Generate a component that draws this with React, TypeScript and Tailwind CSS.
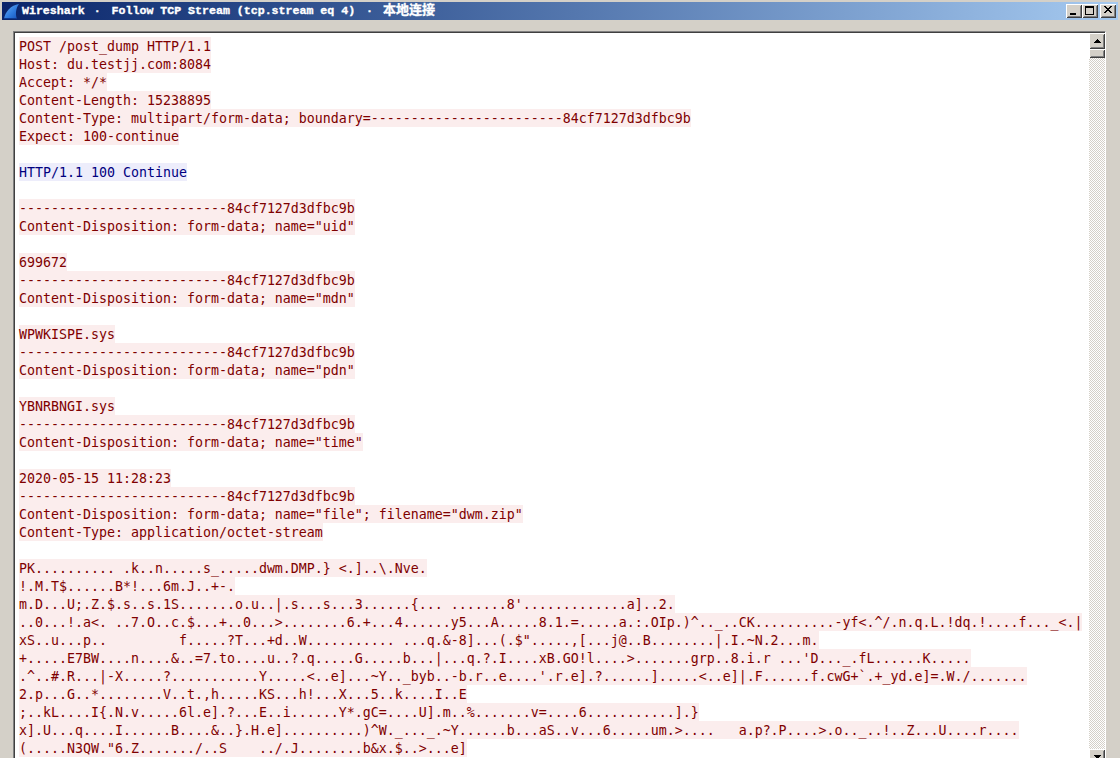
import React from "react";

const B = "--------------------------84cf7127d3dfbc9b";
const lines: string[] = [
  "POST /post_dump HTTP/1.1",
  "Host: du.testjj.com:8084",
  "Accept: */*",
  "Content-Length: 15238895",
  "Content-Type: multipart/form-data; boundary=------------------------84cf7127d3dfbc9b",
  "Expect: 100-continue",
  "",
  "HTTP/1.1 100 Continue",
  "",
  B,
  'Content-Disposition: form-data; name="uid"',
  "",
  "699672",
  B,
  'Content-Disposition: form-data; name="mdn"',
  "",
  "WPWKISPE.sys",
  B,
  'Content-Disposition: form-data; name="pdn"',
  "",
  "YBNRBNGI.sys",
  B,
  'Content-Disposition: form-data; name="time"',
  "",
  "2020-05-15 11:28:23",
  B,
  'Content-Disposition: form-data; name="file"; filename="dwm.zip"',
  "Content-Type: application/octet-stream",
  "",
  "PK.......... .k..n.....s_.....dwm.DMP.} <.]..\\.Nve.",
  "!.M.T$......B*!...6m.J..+-.",
  "m.D...U;.Z.$.s..s.1S.......o.u..|.s...s...3......{... .......8'.............a]..2.",
  "..0...!.a<. ..7.O..c.$...+..0...>........6.+...4......y5...A.....8.1.=.....a.:.OIp.)^.._..CK..........-yf<.^/.n.q.L.!dq.!....f..._<.|",
  "xS..u...p..         f.....?T...+d..W........... ...q.&-8]...(.$\".....,[...j@..B........|.I.~N.2...m.",
  "+.....E7BW....n....&..=7.to....u..?.q.....G.....b...|...q.?.I....xB.GO!l....>.......grp..8.i.r ...'D..._.fL......K.....",
  ".^..#.R...|-X.....?...........Y.....<..e]...~Y.._byb..-b.r..e....'.r.e].?......].....<..e]|.F......f.cwG+`.+_yd.e]=.W./.......",
  "2.p...G..*........V..t.,h.....KS...h!...X...5..k....I..E",
  ";..kL....I{.N.v.....6l.e].?...E..i......Y*.gC=....U].m..%.......v=....6...........].}",
  "x].U...q....I......B....&..}.H.e]..........)^W._..._.~Y......b...aS..v...6.....um.>....   a.p?.P....>.o.._..!..Z...U....r....",
  "(.....N3QW.\"6.Z......./..S    ../.J........b&x.$..>...e]",
];

const raised =
  "bg-[#d4d0c8] shadow-[inset_1px_1px_0_#ffffff,inset_-1px_-1px_0_#404040,inset_2px_2px_0_#d4d0c8,inset_-2px_-2px_0_#808080]";

function CaptionButton({ children, className = "" }: { children: React.ReactNode; className?: string }) {
  return (
    <div className={`w-4 h-[14px] flex items-center justify-center ${raised} ${className}`}>
      <svg width="16" height="14" viewBox="0 0 16 14" shapeRendering="crispEdges" fill="#000">
        {children}
      </svg>
    </div>
  );
}

export default function App() {
  return (
    <div className="w-[1120px] h-[758px] overflow-hidden bg-[#d4d0c8] flex flex-col">
      <div className="mx-[2px] mt-[2px] h-[18px] shrink-0 flex items-center pr-[2px] bg-gradient-to-r from-[#0a246a] to-[#a6caf0]">
        <svg width="18" height="17" viewBox="0 0 18 17" className="shrink-0">
          <defs>
            <linearGradient id="fin" x1="0" y1="0" x2="1" y2="1">
              <stop offset="0" stopColor="#6fb0f0" />
              <stop offset="0.55" stopColor="#2f7ce0" />
              <stop offset="1" stopColor="#1550b8" />
            </linearGradient>
          </defs>
          <path d="M2 16 C3 9 9 2 17 1 C14 5 13 11 15 16 Z" fill="url(#fin)" />
          <path d="M2 15 H15 V16 H2 Z" fill="#0f3a90" />
        </svg>
        <span className="ml-[2px] whitespace-pre text-white font-bold text-[11.6px] leading-[18px] [-webkit-text-stroke:0.35px_white] font-['Liberation_Mono','Noto_Sans_CJK_SC',monospace]">
          Wireshark
          <span className="ml-[9px] mr-[11px]">·</span>
          Follow TCP Stream (tcp.stream eq 4)
          <span className="ml-[11px] mr-[10px]">·</span>
          <span className="text-[13px]">本地连接</span>
        </span>
        <div className="ml-auto flex">
          <CaptionButton>
            <rect x="4" y="9" width="6" height="2" />
          </CaptionButton>
          <CaptionButton className="mr-[2px]">
            <path d="M3 2h9v9H3z M4 4v6h7V4z" fillRule="evenodd" />
          </CaptionButton>
          <CaptionButton>
            <path d="M4 2h2v1H4z M10 2h2v1h-2z M5 3h2v1H5z M9 3h2v1H9z M6 4h4v1H6z M7 5h2v1H7z M6 6h4v1H6z M5 7h2v1H5z M9 7h2v1H9z M4 8h2v1H4z M10 8h2v1h-2z" />
          </CaptionButton>
        </div>
      </div>

      <div className="flex-1 min-h-0 pl-[13px] pr-[14px] pt-[11px]">
        <div className="w-[1093px] h-[734px] flex bg-white border-t border-l border-t-[#808080] border-l-[#808080] border-r border-r-white">
          <div className="flex-1 min-w-0 flex border-t border-l border-t-[#404040] border-l-[#404040]">
            <div className="flex-1 min-w-0 overflow-hidden pl-1 pt-1 font-['DejaVu_Sans_Mono',monospace] text-[13.29px] leading-[20px] whitespace-pre">
              {lines.map((l, i) => (
                <div key={i} className="h-[18px]">
                  {l && (
                    <span
                      className={
                        i === 7
                          ? "inline-block h-[18px] bg-[#ededfb] text-[#00007f]"
                          : "inline-block h-[18px] bg-[#fbeded] text-[#7f0000]"
                      }
                    >
                      {l}
                    </span>
                  )}
                </div>
              ))}
            </div>
            <div className="w-4 shrink-0 flex flex-col">
              <div className={`h-4 shrink-0 flex items-center justify-center ${raised}`}>
                <svg width="8" height="5" viewBox="0 0 8 5" shapeRendering="crispEdges">
                  <path d="M4 0 L8 4 L0 4 Z" fill="#000" />
                </svg>
              </div>
              <div className={`h-[9px] shrink-0 ${raised}`} />
              <div className="flex-1 bg-[repeating-conic-gradient(#d4d0c8_0_25%,#ffffff_0_50%)] bg-[length:2px_2px]" />
              <div className={`h-4 shrink-0 flex items-center justify-center ${raised}`}>
                <svg width="8" height="5" viewBox="0 0 8 5" shapeRendering="crispEdges">
                  <path d="M0 0 L8 0 L4 4 Z" fill="#000" />
                </svg>
              </div>
            </div>
          </div>
        </div>
      </div>
    </div>
  );
}
